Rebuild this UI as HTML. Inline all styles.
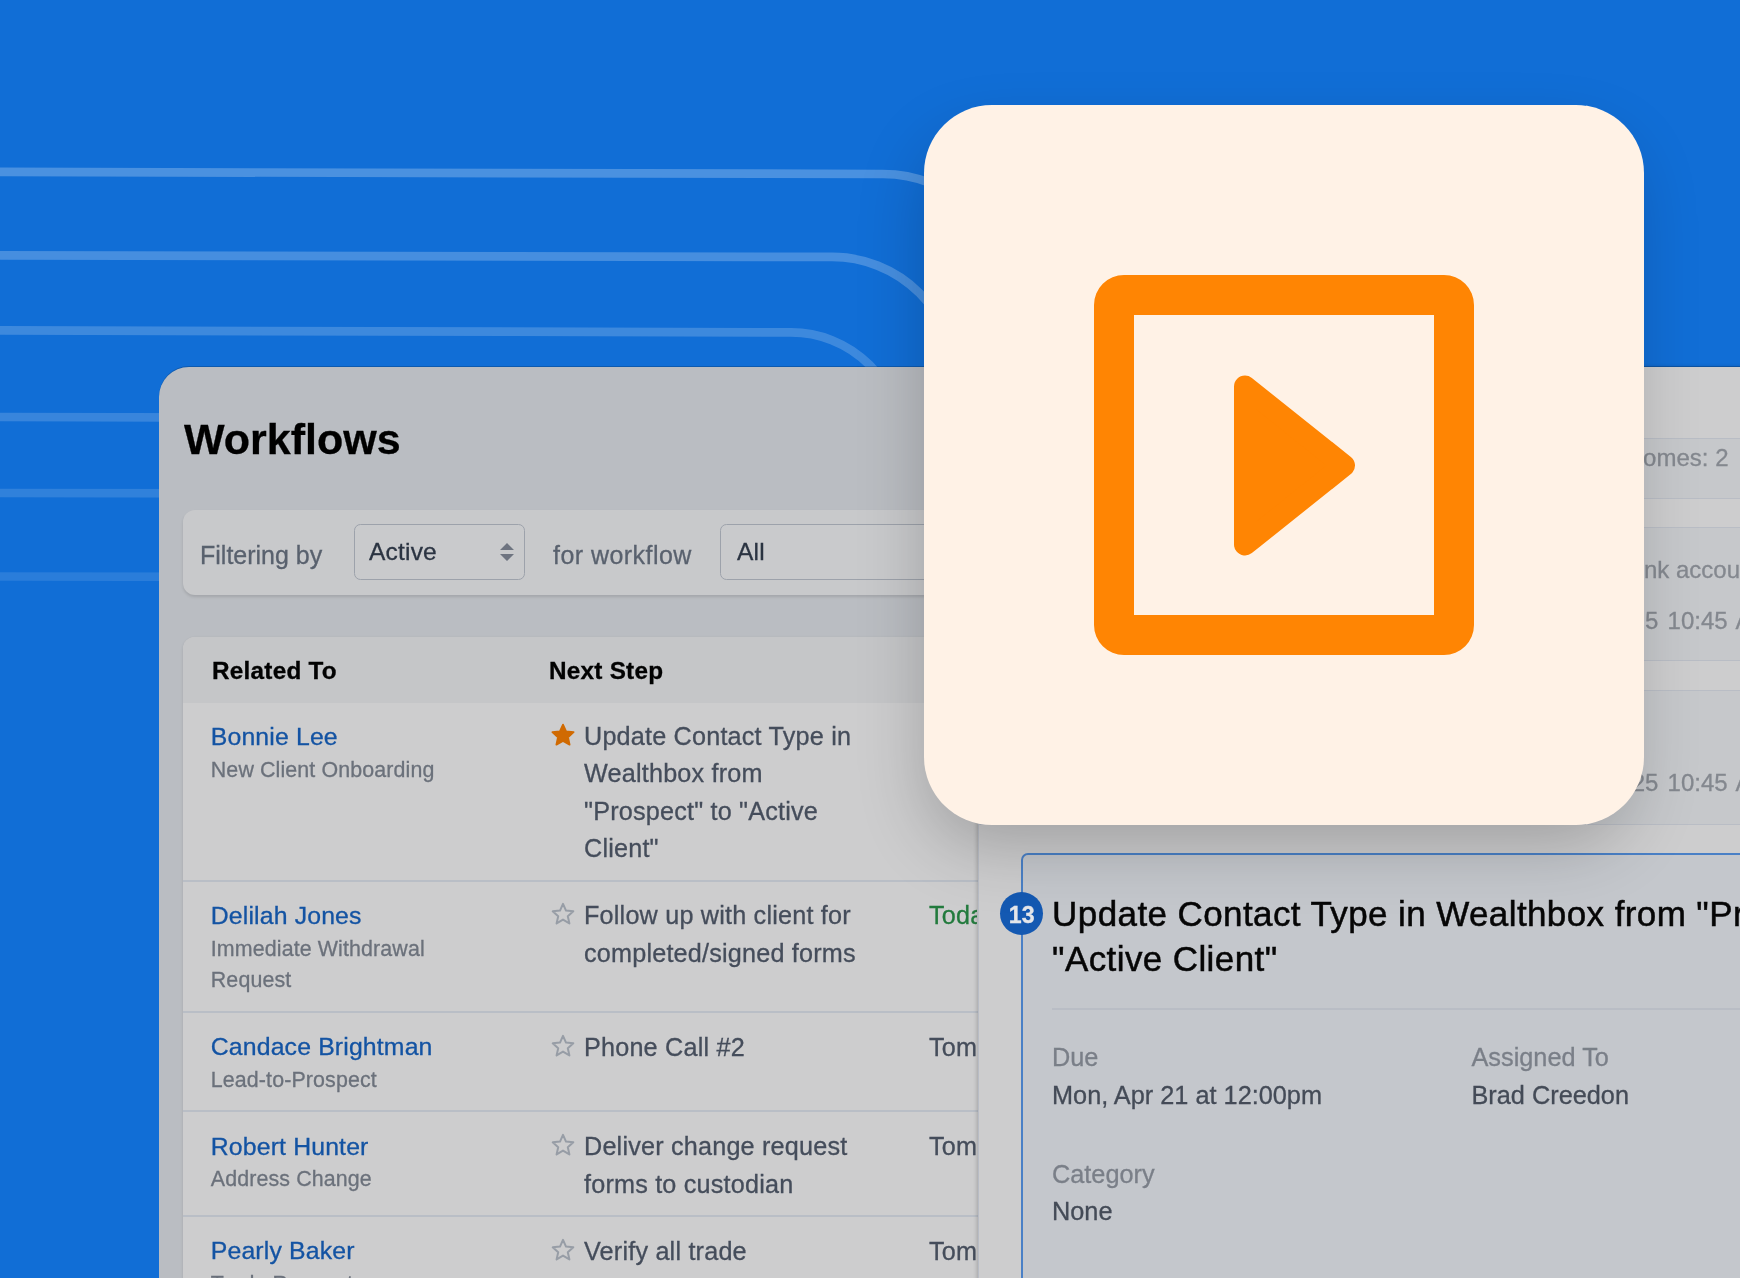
<!DOCTYPE html>
<html lang="en">
<head>
<meta charset="utf-8">
<title>Workflows</title>
<style>
*{box-sizing:border-box;margin:0;padding:0}
html,body{width:1740px;height:1278px;overflow:hidden}
body{background:#116ed6;font-family:"Liberation Sans",Arial,sans-serif;position:relative;color:#454d5b;-webkit-text-stroke:.3px currentColor}
.abs{position:absolute}
.t{position:absolute;white-space:nowrap;line-height:1}
#left,#right,#card{will-change:transform}
#lines{position:absolute;left:0;top:0;width:1740px;height:1278px}
/* left panel */
#left{position:absolute;left:159px;top:367px;width:900px;height:920px;background:#babdc2;border-top-left-radius:30px;box-shadow:0 -1px 0 rgba(0,0,0,.18)}
#h1{left:25px;top:51px;font-size:43px;font-weight:700;color:#000}
#filter{position:absolute;left:24px;top:143px;width:900px;height:85px;background:#c8c9cb;border-radius:12px;box-shadow:0 2px 3px rgba(0,0,0,.12)}
.sel{position:absolute;top:14px;height:56px;border:1.5px solid #9da2ab;border-radius:6.5px;background:#c9cacc}
.lbl{font-size:25px;color:#59616e}
.selt{font-size:24.5px;color:#2b3442;letter-spacing:.2px}
#table{position:absolute;left:24px;top:270px;width:900px;height:700px;background:#cdcdce;border-top-left-radius:12px;overflow:hidden;box-shadow:0 1px 3px rgba(0,0,0,.12)}
#thead{position:absolute;left:0;top:0;width:100%;height:66px;background:#c5c6c8}
.th{font-size:24.3px;font-weight:700;color:#020202;letter-spacing:.25px}
.hr{position:absolute;left:0;width:100%;height:2px;background:#b9bec6}
.lnk{font-size:24.8px;color:#1353a3;letter-spacing:.15px;margin:1px 0 0 -1px}
.sub{position:absolute;white-space:nowrap;font-size:21.4px;color:#6b717b;letter-spacing:.12px;line-height:31.8px;margin:1px 0 0 -1px}
.step{font-size:25.2px;color:#454d5b;letter-spacing:.2px;line-height:37.2px;white-space:nowrap;position:absolute;margin:1px 0 0 -1px}
.star{position:absolute;width:24px;height:23px;margin:0 0 0 -1px}
/* right panel */
#right{overflow:hidden;position:absolute;left:978px;top:367px;width:800px;height:920px;background:#cdcdce;border-left:1px solid #b8bcc5;box-shadow:-1px 0 4px rgba(0,0,0,.2),0 -1px 0 rgba(0,0,0,.18)}
.rbox{position:absolute;left:-10px;width:900px;border:1.5px solid #b9bdc5;background:#c6c8cb}
.rt{font-size:24px;color:#84888f}
#stepbox{position:absolute;width:800px;height:500px;border:2px solid #4a80c6;border-radius:7px;background:#c4c7cc}
#badge{position:absolute;width:43px;height:43px;border-radius:50%;background:#1459b2;color:#e4e6ea;font-weight:700;font-size:23.2px;text-align:center;line-height:46px}
#title{margin:1.6px 0 0 -.4px;font-size:35px;letter-spacing:.4px;color:#060606;-webkit-text-stroke:.5px currentColor;line-height:44.6px;position:absolute;white-space:nowrap}
.fl{font-size:25.3px;color:#7a7f88}
.fv{font-size:25.3px;color:#444b57}
#rin{position:absolute;left:-1px;top:0;width:800px;height:920px}
/* card */
#card{position:absolute;left:924px;top:105px;width:720px;height:720px;border-radius:68px;background:#fff2e6;box-shadow:-6px 28px 70px -10px rgba(0,0,0,.23)}
#icon{position:absolute;left:170px;top:170px;width:380px;height:380px}
</style>
</head>
<body>
<svg id="lines" viewBox="0 0 1740 1278" fill="none" stroke="#ffffff" stroke-width="8.7">
<path stroke-opacity=".245" d="M-10 171.9 L883 174 a129 129 0 0 1 129 129"/>
<path stroke-opacity=".225" d="M-10 255.4 L832 256.9 a124 124 0 0 1 124 124"/>
<path stroke-opacity=".19" d="M-10 330.4 L791 332.4 a111 111 0 0 1 111 111"/>
<path stroke-opacity=".165" d="M-10 417 L400 418"/>
<path stroke-opacity=".135" d="M-10 493 L400 493.6"/>
<path stroke-opacity=".105" d="M-10 576.5 L400 577"/>
</svg>

<div id="left">
  <div class="t" id="h1">Workflows</div>
  <div id="filter">
    <div class="t lbl" style="left:17px;top:33px">Filtering by</div>
    <div class="sel" style="left:171px;width:171px">
      <div class="t selt" style="left:14px;top:14.6px">Active</div>
      <svg class="abs" style="left:145px;top:17.5px" width="14" height="18" viewBox="0 0 14 18"><path d="M7 0 L14 7 H0 Z M7 18 L14 11 H0 Z" fill="#6e7480"/></svg>
    </div>
    <div class="t lbl" style="left:370px;top:33px;letter-spacing:.45px">for workflow</div>
    <div class="sel" style="left:537px;width:400px">
      <div class="t selt" style="left:16px;top:14.6px">All</div>
    </div>
  </div>
  <div id="table">
    <div id="thead">
      <div class="t th" style="left:29px;top:22px">Related To</div>
      <div class="t th" style="left:366px;top:22px">Next Step</div>
    </div>
    <div class="t lnk" style="left:28.8px;top:86.8px">Bonnie Lee</div>
    <div class="sub" style="left:28.8px;top:116.7px">New Client Onboarding</div>
    <svg class="star" style="left:368.5px;top:86.2px" viewBox="0 0 24 23"><path d="M12 1.6 L15.1 8.4 L22.6 9.2 L17 14.3 L18.6 21.6 L12 17.9 L5.4 21.6 L7 14.3 L1.4 9.2 L8.9 8.4 Z" fill="#d06a02" stroke="#d06a02" stroke-width="1.8" stroke-linejoin="round"/></svg>
    <div class="step" style="left:402px;top:80.1px">Update Contact Type in<br>Wealthbox from<br>&quot;Prospect&quot; to &quot;Active<br>Client&quot;</div>
    <div class="hr" style="top:243.0px"></div>
    <div class="t lnk" style="left:28.8px;top:265.7px">Delilah Jones</div>
    <div class="sub" style="left:28.8px;top:295.6px">Immediate Withdrawal<br>Request</div>
    <svg class="star" style="left:368.5px;top:265.1px" viewBox="0 0 24 23"><path d="M12 1.8 L15 8.6 L22.3 9.3 L16.8 14.2 L18.4 21.4 L12 17.6 L5.6 21.4 L7.2 14.2 L1.7 9.3 L9 8.6 Z" fill="none" stroke="#979da6" stroke-width="2" stroke-linejoin="round"/></svg>
    <div class="step" style="left:402px;top:259.3px">Follow up with client for<br>completed/signed forms</div>
    <div class="step" style="left:747px;top:259.3px;color:#227a3d;width:48px;overflow:hidden">Today</div>
    <div class="hr" style="top:374.0px"></div>
    <div class="t lnk" style="left:28.8px;top:397.2px">Candace Brightman</div>
    <div class="sub" style="left:28.8px;top:427.1px">Lead-to-Prospect</div>
    <svg class="star" style="left:368.5px;top:396.6px" viewBox="0 0 24 23"><path d="M12 1.8 L15 8.6 L22.3 9.3 L16.8 14.2 L18.4 21.4 L12 17.6 L5.6 21.4 L7.2 14.2 L1.7 9.3 L9 8.6 Z" fill="none" stroke="#979da6" stroke-width="2" stroke-linejoin="round"/></svg>
    <div class="step" style="left:402px;top:390.7px">Phone Call #2</div>
    <div class="step" style="left:747px;top:390.7px;color:#454d5b;width:48px;overflow:hidden">Tomorrow</div>
    <div class="hr" style="top:472.5px"></div>
    <div class="t lnk" style="left:28.8px;top:497.0px">Robert Hunter</div>
    <div class="sub" style="left:28.8px;top:526.3px">Address Change</div>
    <svg class="star" style="left:368.5px;top:496.4px" viewBox="0 0 24 23"><path d="M12 1.8 L15 8.6 L22.3 9.3 L16.8 14.2 L18.4 21.4 L12 17.6 L5.6 21.4 L7.2 14.2 L1.7 9.3 L9 8.6 Z" fill="none" stroke="#979da6" stroke-width="2" stroke-linejoin="round"/></svg>
    <div class="step" style="left:402px;top:490.3px">Deliver change request<br>forms to custodian</div>
    <div class="step" style="left:747px;top:490.3px;color:#454d5b;width:48px;overflow:hidden">Tomorrow</div>
    <div class="hr" style="top:577.5px"></div>
    <div class="t lnk" style="left:28.8px;top:601.2px">Pearly Baker</div>
    <div class="sub" style="left:28.8px;top:630.7px">Trade Request</div>
    <svg class="star" style="left:368.5px;top:600.6px" viewBox="0 0 24 23"><path d="M12 1.8 L15 8.6 L22.3 9.3 L16.8 14.2 L18.4 21.4 L12 17.6 L5.6 21.4 L7.2 14.2 L1.7 9.3 L9 8.6 Z" fill="none" stroke="#979da6" stroke-width="2" stroke-linejoin="round"/></svg>
    <div class="step" style="left:402px;top:594.5px">Verify all trade</div>
    <div class="step" style="left:747px;top:594.5px;color:#454d5b;width:48px;overflow:hidden">Tomorrow</div>
  </div>
</div>

<div id="right">
<div id="rin">
  <div class="rbox" style="top:70.9px;height:60.8px"></div>
  <div class="rbox" style="top:159.8px;height:134.7px"></div>
  <div class="rbox" style="top:323.0px;height:135.0px"></div>
  <div class="t rt" style="right:49.5px;top:78.7px">Outcomes: 2</div>
  <div class="t rt" style="left:647.3px;top:190.7px">Link accounts</div>
  <div class="t rt" style="left:627px;top:241.6px;word-spacing:2.5px">2025 10:45 AM</div>
  <div class="t rt" style="left:627px;top:404.4px;word-spacing:2.5px">2025 10:45 AM</div>
  <div id="stepbox" style="left:43px;top:486px"></div>
  <div id="badge" style="left:22.2px;top:525.3px">13</div>
  <div id="title" style="left:74.5px;top:523.7px">Update Contact Type in Wealthbox from &quot;Prospect&quot; to<br>&quot;Active Client&quot;</div>
  <div class="abs" style="left:74px;top:641px;width:800px;height:2px;background:#b9bdc5"></div>
  <div class="t fl" style="left:74.0px;top:678.0px">Due</div>
  <div class="t fv" style="left:74.0px;top:715.7px">Mon, Apr 21 at 12:00pm</div>
  <div class="t fl" style="left:493.5px;top:678.0px">Assigned To</div>
  <div class="t fv" style="left:493.5px;top:715.7px">Brad Creedon</div>
  <div class="t fl" style="left:74.0px;top:795.3px">Category</div>
  <div class="t fv" style="left:74.0px;top:832.3px">None</div>
</div>
</div>

<div id="card">
  <svg id="icon" viewBox="0 0 380 380">
    <path fill="#ff8503" fill-rule="evenodd" d="M30 0 H350 A30 30 0 0 1 380 30 V350 A30 30 0 0 1 350 380 H30 A30 30 0 0 1 0 350 V30 A30 30 0 0 1 30 0 Z M40 40 V340 H340 V40 Z"/>
    <path fill="#ff8503" stroke="#ff8503" stroke-width="22" stroke-linejoin="round" d="M151 111.5 L250 190.5 L151 269.5 Z"/>
  </svg>
</div>
</body>
</html>
